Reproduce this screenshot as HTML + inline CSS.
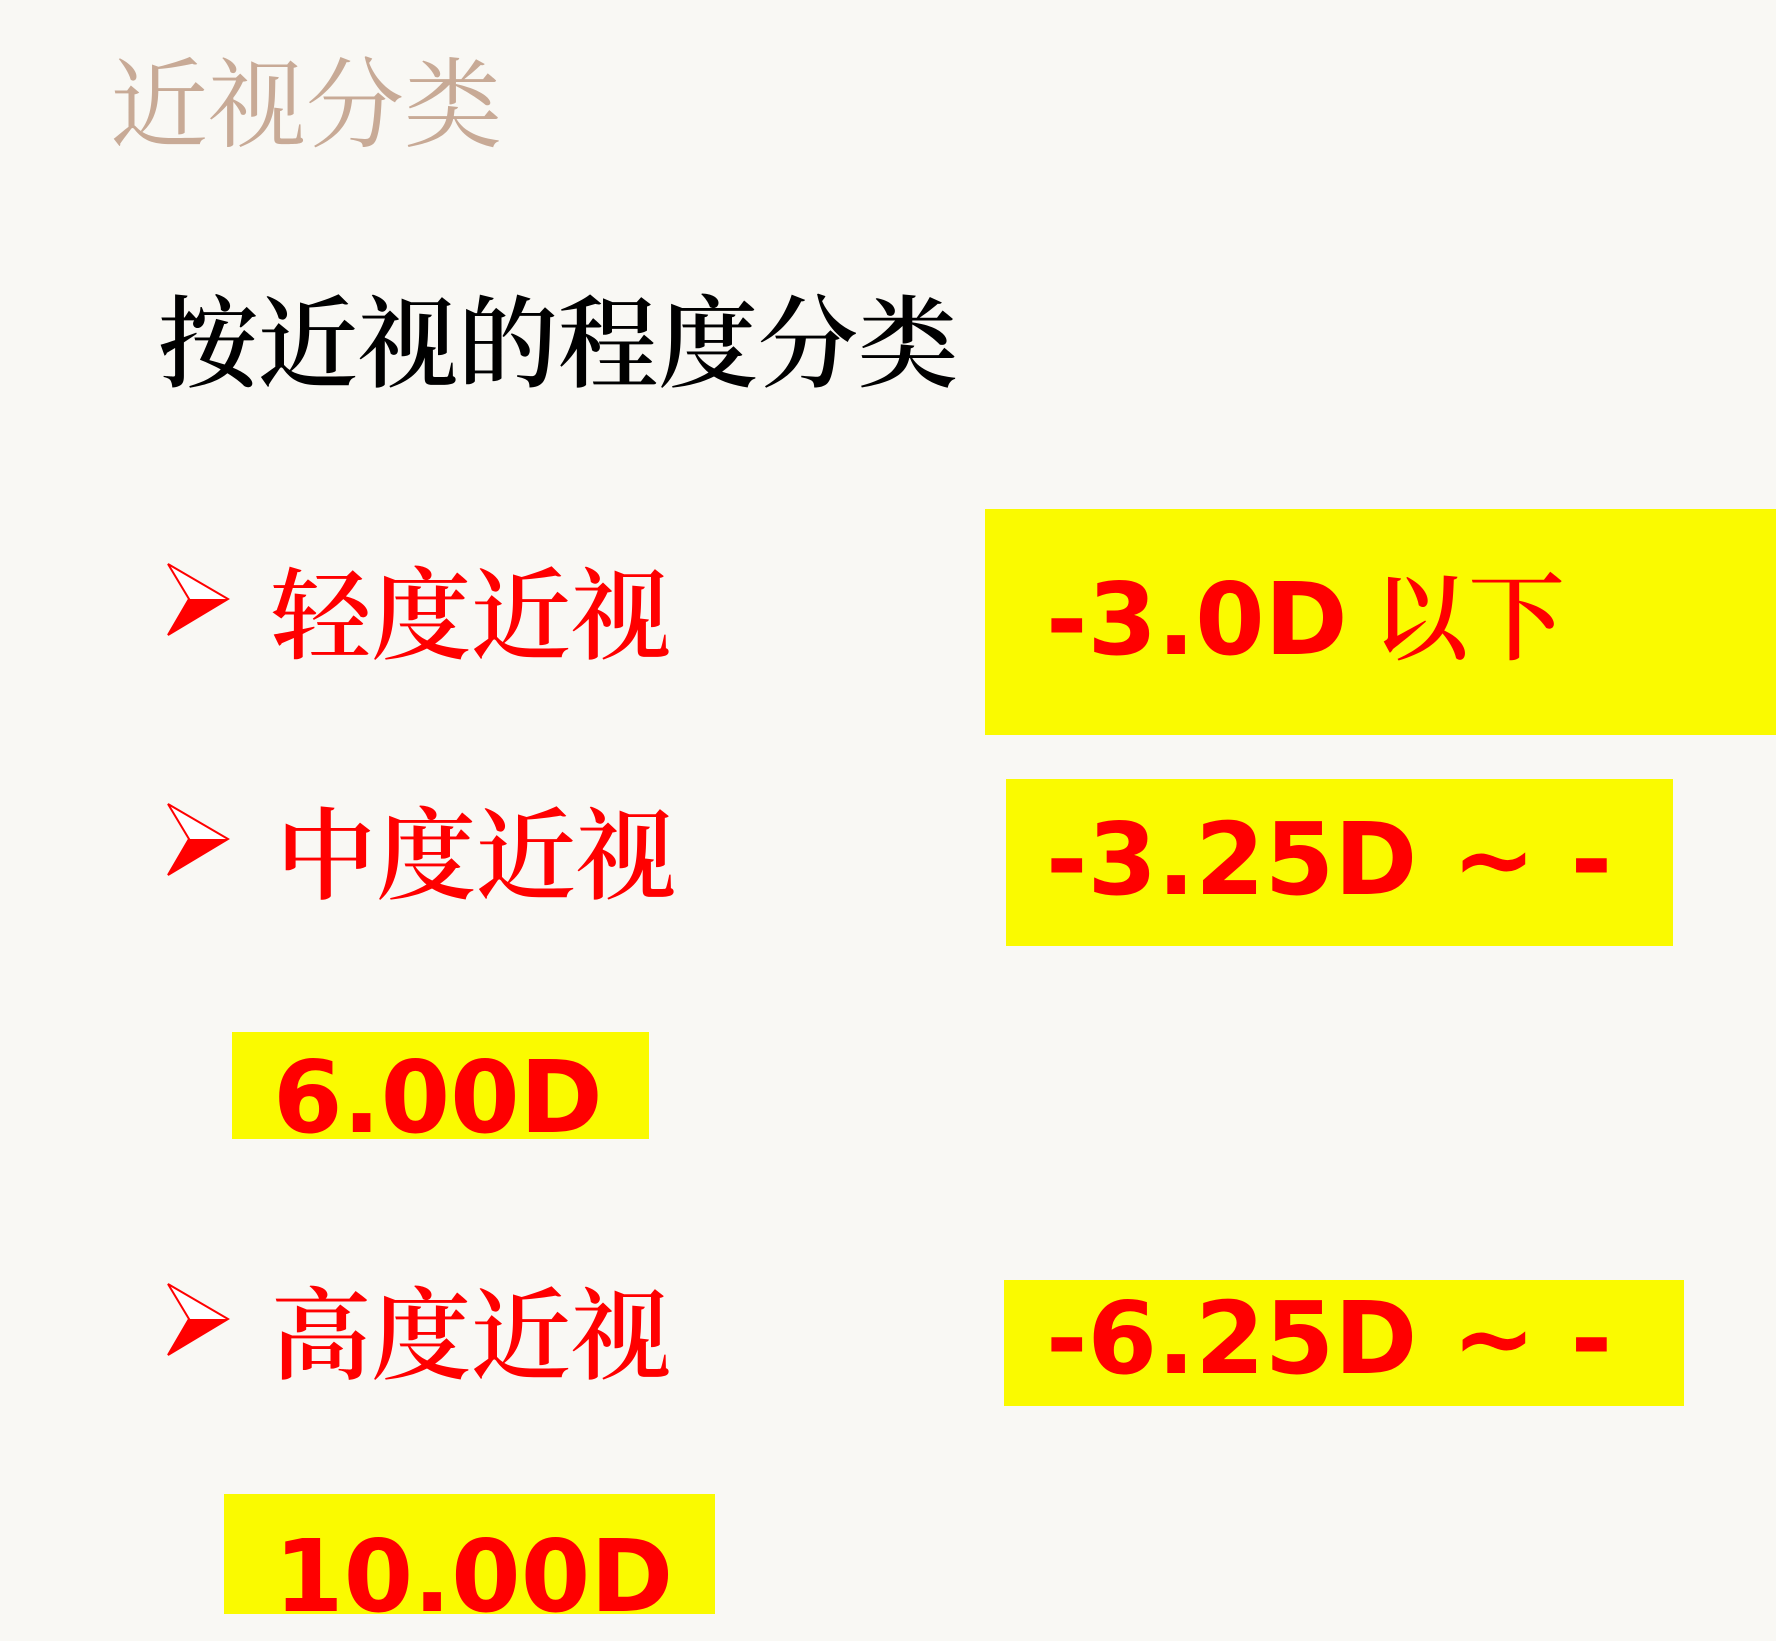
<!DOCTYPE html>
<html><head><meta charset="utf-8"><style>
html,body{margin:0;padding:0}
body{width:1776px;height:1641px;background:#f9f8f4;position:relative;overflow:hidden}
.a{position:absolute;white-space:nowrap;line-height:1}
.cjk{font-family:"Liberation Serif","Noto Serif CJK SC",serif}
.num{font-family:"DejaVu Sans","Liberation Sans","Noto Sans CJK SC",sans-serif;font-weight:bold;color:#ff0000;font-size:100px}
.y{position:absolute;background:#fafa00}
.red{color:#ff0000;font-weight:600}
</style></head><body>
<div class="a cjk" style="left:110px;top:58px;font-size:98px;color:#c8aa96">近视分类</div>
<div class="a cjk" style="left:158px;top:296px;font-size:100px;color:#000;font-weight:600">按近视的程度分类</div>

<div class="y" style="left:985px;top:509px;width:791px;height:226px"></div>
<div class="y" style="left:1006px;top:779px;width:667px;height:167px"></div>
<div class="y" style="left:232px;top:1032px;width:417px;height:107px"></div>
<div class="y" style="left:1004px;top:1280px;width:680px;height:126px"></div>
<div class="y" style="left:224px;top:1494px;width:491px;height:120px"></div>

<svg class="a" style="left:166px;top:562px" width="66" height="76" viewBox="0 0 66 76"><path d="M2 2 L62 37 L2 73 L23 37 Z" fill="#fff" stroke="#f00" stroke-width="2"/><path d="M23 37 L62 37 L2 73 Z" fill="#f00"/></svg>
<svg class="a" style="left:166px;top:802px" width="66" height="76" viewBox="0 0 66 76"><path d="M2 2 L62 37 L2 73 L23 37 Z" fill="#fff" stroke="#f00" stroke-width="2"/><path d="M23 37 L62 37 L2 73 Z" fill="#f00"/></svg>
<svg class="a" style="left:166px;top:1282px" width="66" height="76" viewBox="0 0 66 76"><path d="M2 2 L62 37 L2 73 L23 37 Z" fill="#fff" stroke="#f00" stroke-width="2"/><path d="M23 37 L62 37 L2 73 Z" fill="#f00"/></svg>

<div class="a cjk red" style="left:271px;top:568px;font-size:100px">轻度近视</div>
<div class="a cjk red" style="left:276px;top:808px;font-size:100px">中度近视</div>
<div class="a cjk red" style="left:271px;top:1288px;font-size:100px">高度近视</div>

<div class="a num" style="left:1046px;top:570px">-3.0D <span style="font-family:'Liberation Serif','Noto Serif CJK SC',serif;font-weight:600;font-size:96px;position:relative;left:-10px;top:-2px">以下</span></div>
<div class="a num" style="left:1046px;top:810px">-3.25D ~ -</div>
<div class="a num" style="left:273px;top:1048px">6.00D</div>
<div class="a num" style="left:1046px;top:1289px">-6.25D ~ -</div>
<div class="a num" style="left:274px;top:1527px">10.00D</div>
</body></html>
